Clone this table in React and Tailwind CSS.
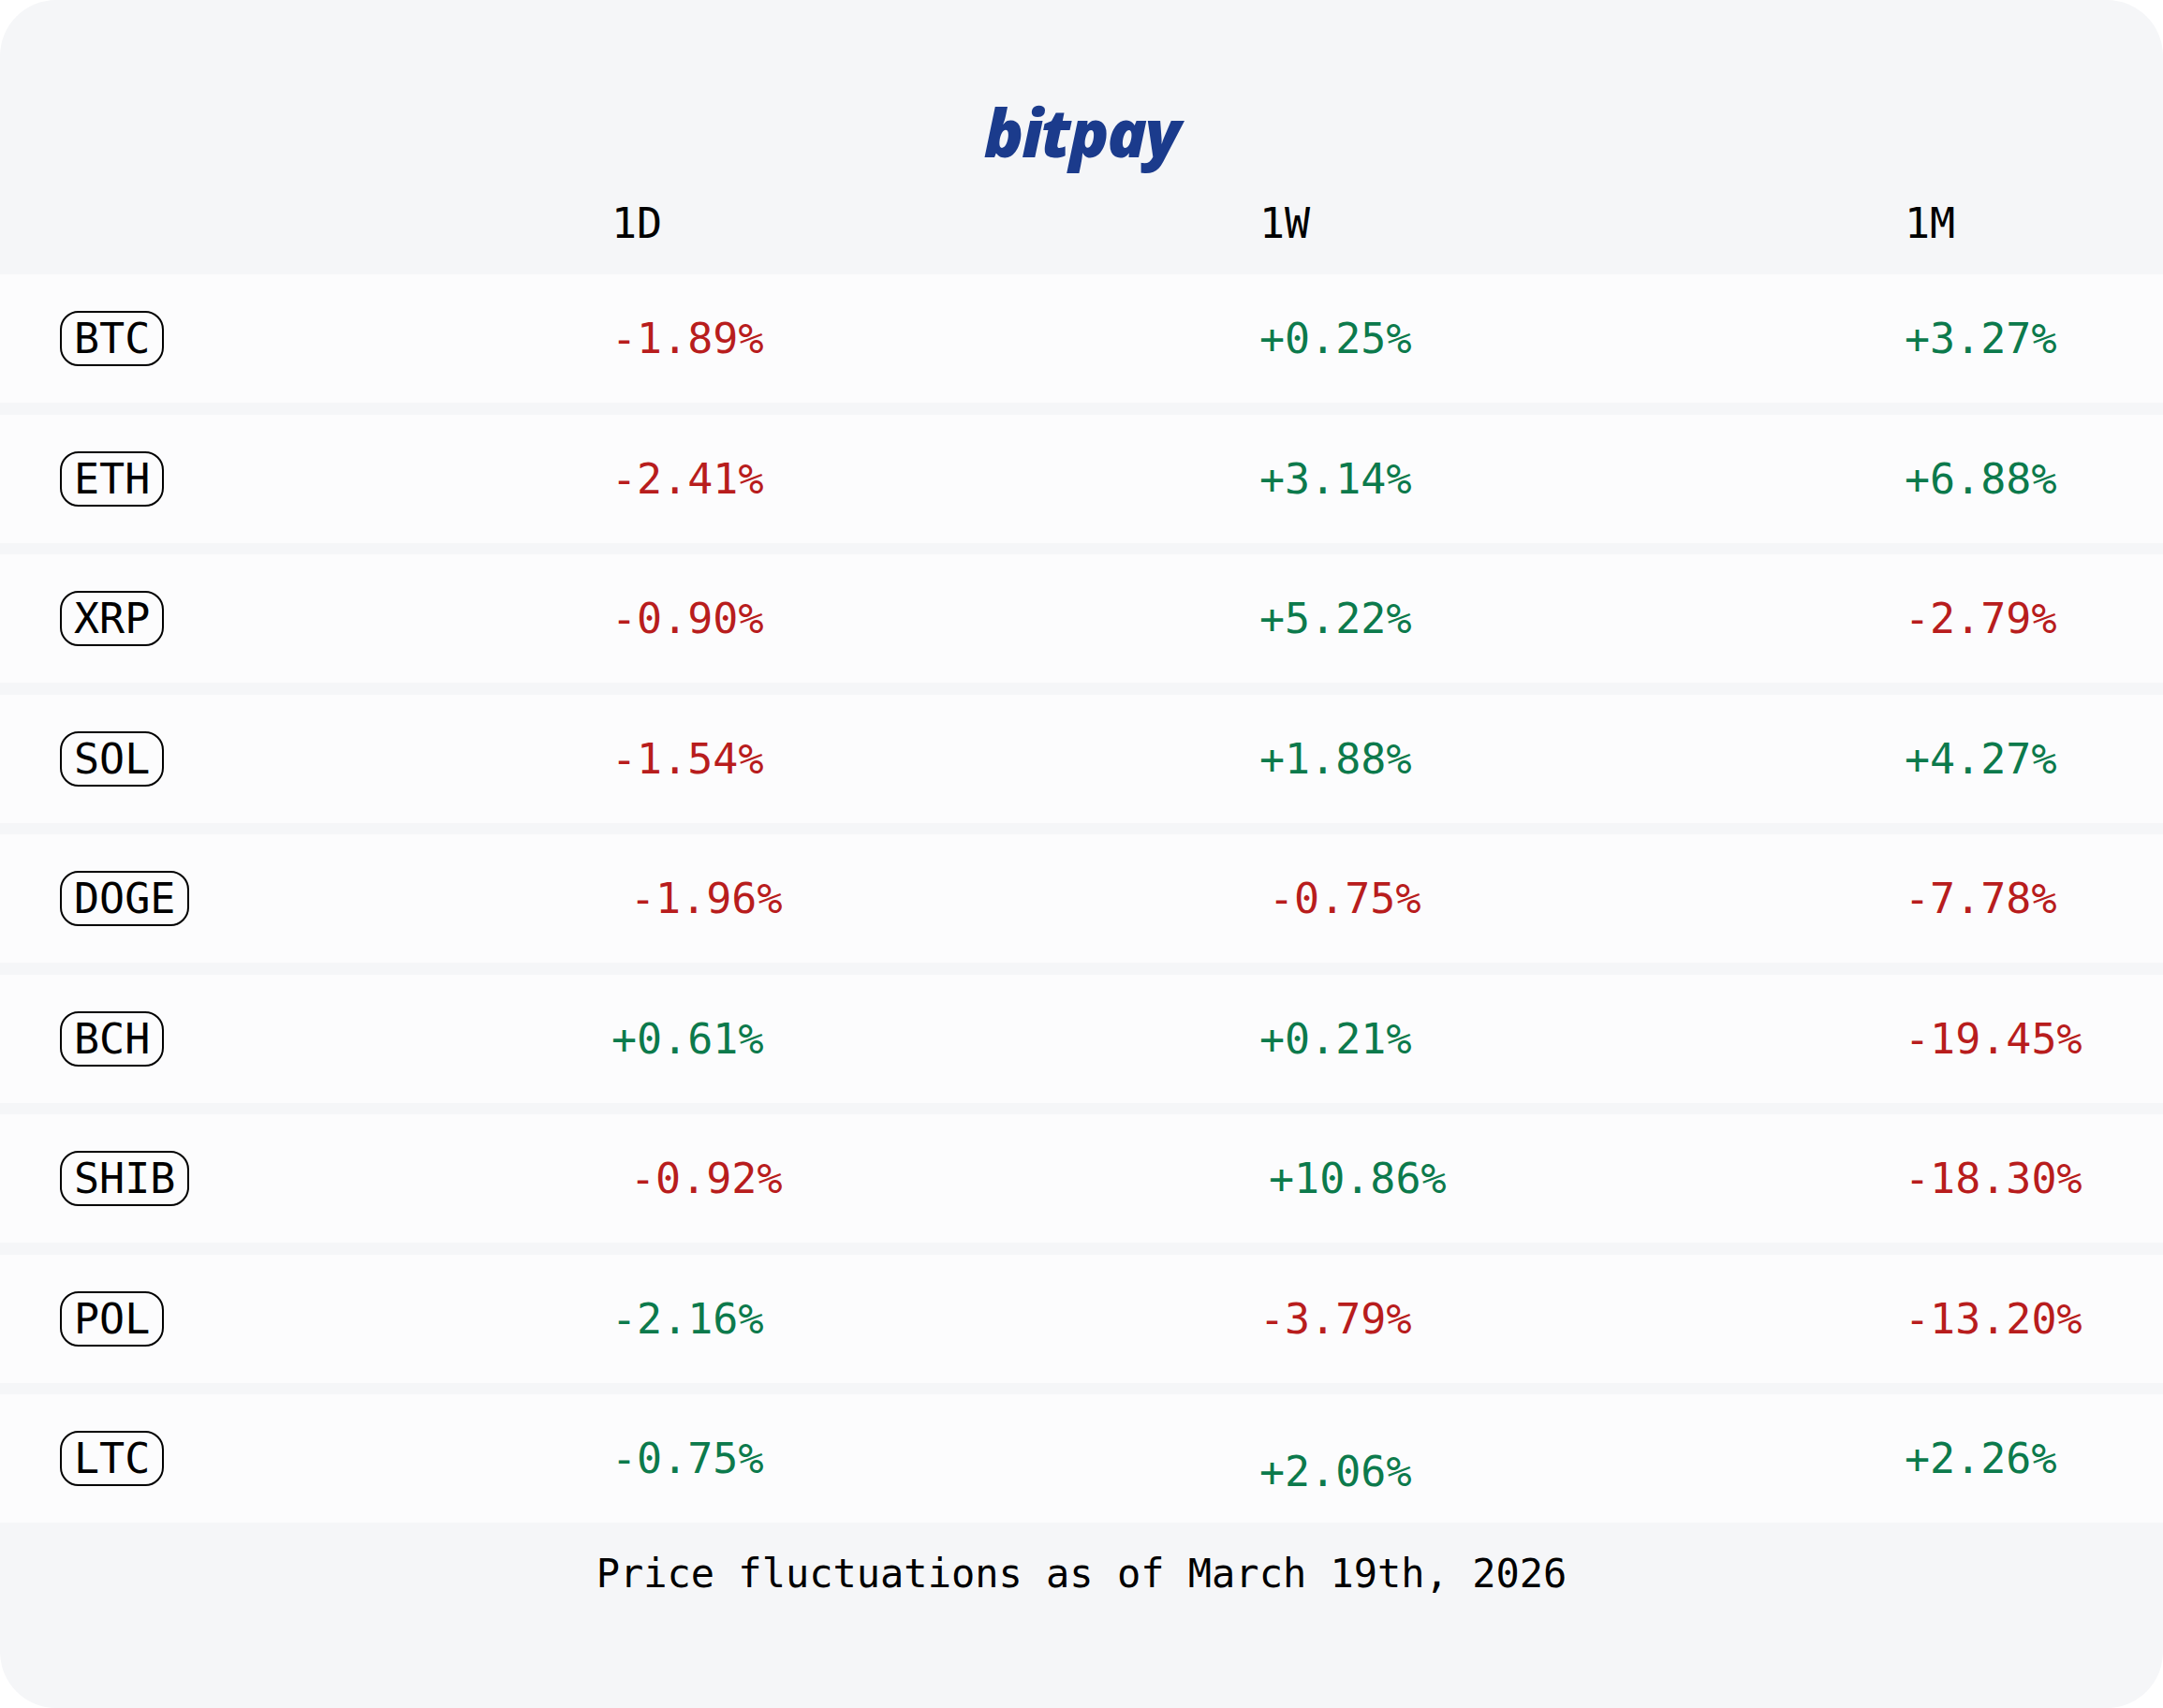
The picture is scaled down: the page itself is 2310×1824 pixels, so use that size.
import React from "react";

const rows = [
  { sym: "BTC", d: ["-1.89%", "r"], w: ["+0.25%", "g"], m: ["+3.27%", "g"] },
  { sym: "ETH", d: ["-2.41%", "r"], w: ["+3.14%", "g"], m: ["+6.88%", "g"] },
  { sym: "XRP", d: ["-0.90%", "r"], w: ["+5.22%", "g"], m: ["-2.79%", "r"] },
  { sym: "SOL", d: ["-1.54%", "r"], w: ["+1.88%", "g"], m: ["+4.27%", "g"] },
  { sym: "DOGE", d: ["-1.96%", "r", "ml-[20px]"], w: ["-0.75%", "r", "ml-[10px]"], m: ["-7.78%", "r"] },
  { sym: "BCH", d: ["+0.61%", "g"], w: ["+0.21%", "g"], m: ["-19.45%", "r"] },
  { sym: "SHIB", d: ["-0.92%", "r", "ml-[20px]"], w: ["+10.86%", "g", "ml-[10px]"], m: ["-18.30%", "r"] },
  { sym: "POL", d: ["-2.16%", "g"], w: ["-3.79%", "r"], m: ["-13.20%", "r"] },
  { sym: "LTC", d: ["-0.75%", "g"], w: ["+2.06%", "g", "pt-[28px]"], m: ["+2.26%", "g"] },
];

const mono = "font-['DejaVu_Sans_Mono','Liberation_Mono',monospace]";

function Cell({ v }) {
  const [txt, tone, extra] = v;
  return (
    <div className={`${extra || ""}`}>
      <span className={`text-[45px] leading-none slashed-zero ${tone === "r" ? "text-[#b81d1d]" : "text-[#0c7a4c]"}`}>
        {txt}
      </span>
    </div>
  );
}

export default function App() {
  return (
    <div className={`w-[2310px] h-[1824px] bg-white ${mono}`}>
      <div className="h-full rounded-[60px] bg-[#f5f6f8] flex flex-col overflow-hidden">
        <div className="h-[183px] flex items-end justify-center pb-[7px]">
          <span className="font-['Open_Sans',sans-serif] italic font-extrabold text-[70px] leading-none tracking-[-2px] text-[#1b3b8c]">
            bitpay
          </span>
        </div>

        <div className="h-[110px] grid grid-cols-[589px_692px_689px_1fr] pl-[64px] items-center text-[45px] leading-none text-black">
          <div />
          <div>1D</div>
          <div>1W</div>
          <div>1M</div>
        </div>

        <div className="flex flex-col gap-[12.5px]">
          {rows.map((r) => (
            <div
              key={r.sym}
              className="h-[137px] bg-[#fcfcfd] grid grid-cols-[589px_692px_689px_1fr] pl-[64px] items-center"
            >
              <div>
                <span className="inline-flex items-center h-[59px] px-[13px] border-2 border-black rounded-[20px] text-[45px] leading-none text-black">
                  {r.sym}
                </span>
              </div>
              <Cell v={r.d} />
              <Cell v={r.w} />
              <Cell v={r.m} />
            </div>
          ))}
        </div>

        <div className="h-[110px] flex items-center justify-center text-[42px] leading-none text-black">
          Price fluctuations as of March 19th, 2026
        </div>
      </div>
    </div>
  );
}
